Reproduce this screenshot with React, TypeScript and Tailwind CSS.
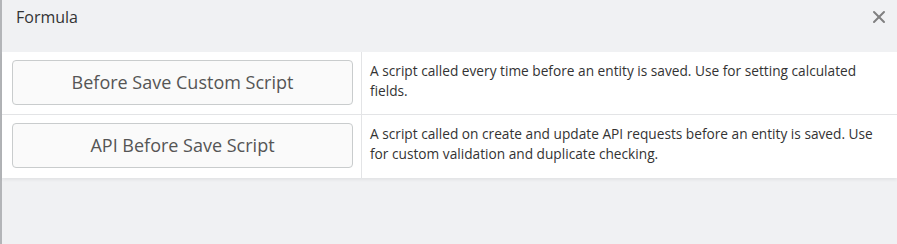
import { X } from 'lucide-react';

const scripts = [
  {
    name: 'Before Save Custom Script',
    text: 'A script called every time before an entity is saved. Use for setting calculated fields.',
  },
  {
    name: 'API Before Save Script',
    text: 'A script called on create and update API requests before an entity is saved. Use for custom validation and duplicate checking.',
  },
];

export default function App() {
  return (
    <div
      className="flex h-[244px] w-[897px] overflow-hidden bg-[#f0f1f3] text-[#333]"
      style={{ fontFamily: '"Open Sans", "Liberation Sans", sans-serif' }}
    >
      <div className="w-[2px] shrink-0 bg-[#b3b5b8]" />
      <div className="flex min-w-0 flex-1 flex-col">
        <div className="flex h-[52px] items-start justify-between pl-[14px] pr-[8px] pt-[5px]">
          <h3 className="text-[16px] leading-[24px] text-[#333]">Formula</h3>
          <button type="button" className="mt-[2px] text-[#808080]" aria-label="Close">
            <X className="h-[20px] w-[20px]" strokeWidth={2.4} />
          </button>
        </div>
        <div className="bg-white shadow-[0_2px_3px_rgba(0,0,0,0.06)]">
          {scripts.map((s, i) => (
            <div key={s.name} className={`flex h-[63px] ${i === 0 ? 'border-b border-[#e3e4e6]' : ''}`}>
              <div className="w-[360px] shrink-0 border-r border-[#e3e4e6] pl-[10px] pr-[8px] pt-[8px]">
                <button
                  type="button"
                  className="flex h-[45px] w-full items-center justify-center rounded-[4px] border border-[#c9cccd] bg-[#fafafa] text-[18px] text-[#555]"
                >
                  {s.name}
                </button>
              </div>
              <div className="flex-1 pl-[8px] pr-[22px] pt-[9px] text-[13.7px] leading-[20px] text-[#333]">{s.text}</div>
            </div>
          ))}
        </div>
      </div>
    </div>
  );
}
